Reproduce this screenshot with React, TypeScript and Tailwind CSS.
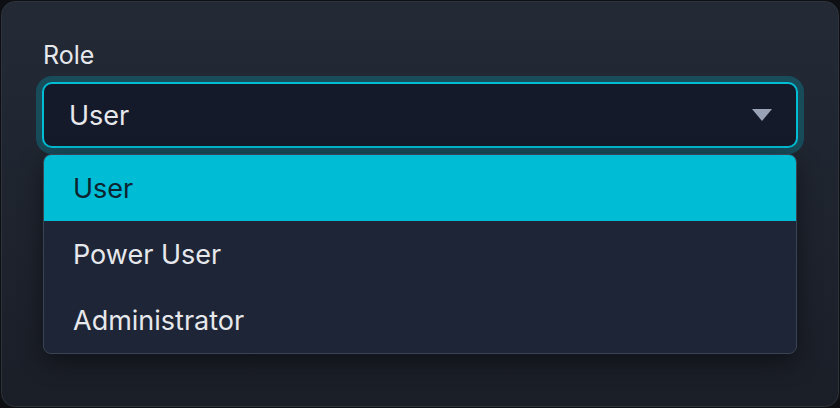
import { useState } from "react";

const roles = ["User", "Power User", "Administrator"];

export default function App() {
  const [selected, setSelected] = useState("User");

  return (
    <div className="h-[408px] w-[840px] bg-[#0d0f13] p-px" style={{ fontFamily: "Inter, 'Noto Sans', sans-serif" }}>
      <div className="h-[406px] w-[838px] rounded-[14px] border border-[#2c333d] bg-gradient-to-b from-[#232a36] to-[#1a1e27] px-[40px] pt-[38px]">
        {/* Label */}
        <label className="block pl-px text-[25px] leading-[30px] text-[#e6e8ec]">Role</label>

        {/* Select trigger */}
        <button className="mt-[12px] flex h-[66px] w-[756px] items-center justify-between rounded-[10px] border-2 border-[#00bcd4] bg-[#151a2b] pt-[3px] pl-[25px] pr-[24px] text-[27px] text-[#e6e8ec] ring-[6px] ring-[#00bcd4]/25">
          <span>{selected}</span>
          <svg width="20" height="12" viewBox="0 0 20 12" className="-mt-[3px] text-[#9aa3b5]">
            <path d="M0 0 H20 L10 12 Z" fill="currentColor" />
          </svg>
        </button>

        {/* Menu */}
        <div className="mx-px mt-[6px] w-[754px] overflow-hidden rounded-[8px] border border-[#3a4455] bg-[#1e2536] shadow-[0_8px_24px_rgba(0,0,0,0.45)]">
          {roles.map((role) => (
            <div
              key={role}
              onClick={() => setSelected(role)}
              className={
                role === selected
                  ? "flex h-[66px] items-center bg-[#00bcd4] pt-[2px] px-[29px] text-[27px] text-[#0b2430]"
                  : "flex h-[66px] items-center pt-[2px] px-[29px] text-[27px] text-[#e6e8ec]"
              }
            >
              {role}
            </div>
          ))}
        </div>
      </div>
    </div>
  );
}
